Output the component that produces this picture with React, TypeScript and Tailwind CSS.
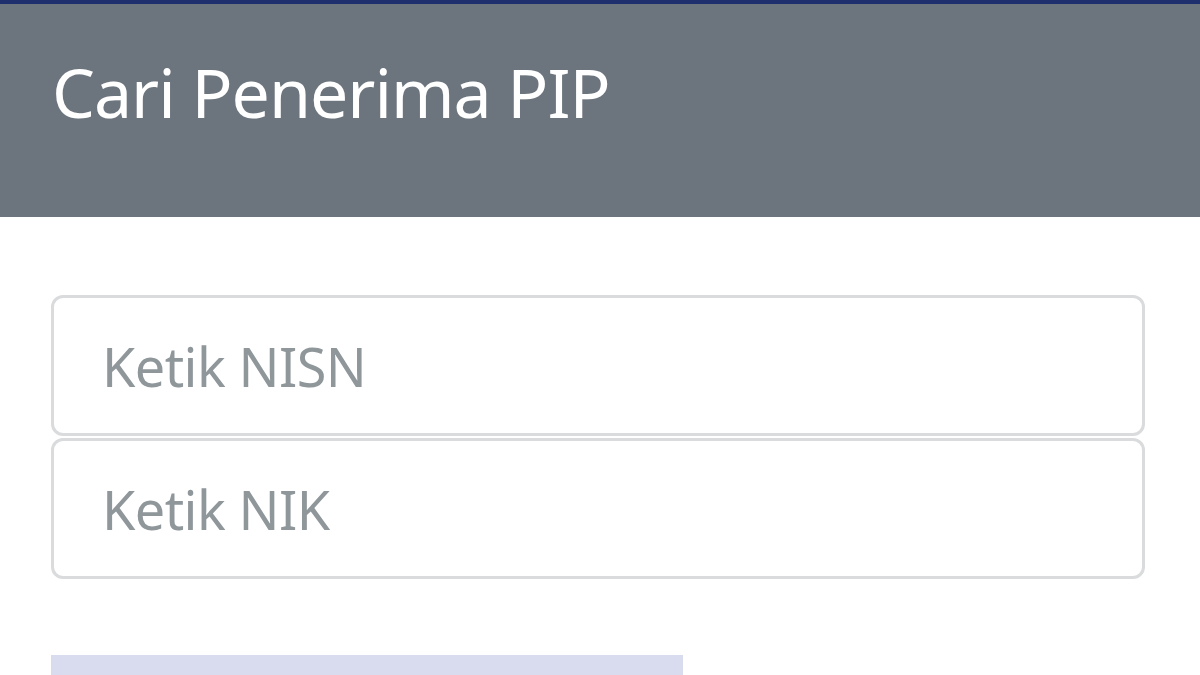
export default function App() {
  return (
    <div className="w-[1200px] h-[675px] overflow-hidden bg-white" style={{ fontFamily: '"Noto Sans", "Open Sans", sans-serif' }}>
      <div className="h-[4px] bg-[#1f2f6e]" />
      <div className="h-[213px] bg-[#6c757d] flex items-center px-[52px]">
        <h1 className="text-white text-[68px] leading-none tracking-[-1px] font-normal -mt-[38px]">Cari Penerima PIP</h1>
      </div>
      <div className="pl-[51px] pr-[55px] pt-[78px] flex flex-col gap-[2px]">
        <div className="h-[141px] border-[3px] border-[#d9dbdd] rounded-[12px] flex items-center px-[48px]">
          <span className="text-[#8f979b] text-[54px] leading-none -tracking-[0.6px]">Ketik NISN</span>
        </div>
        <div className="h-[141px] border-[3px] border-[#d9dbdd] rounded-[12px] flex items-center px-[48px]">
          <span className="text-[#8f979b] text-[54px] leading-none -tracking-[0.6px]">Ketik NIK</span>
        </div>
      </div>
      <div className="ml-[51px] mt-[76px] w-[632px] h-[20px] bg-[#d9dcee]" />
    </div>
  );
}
